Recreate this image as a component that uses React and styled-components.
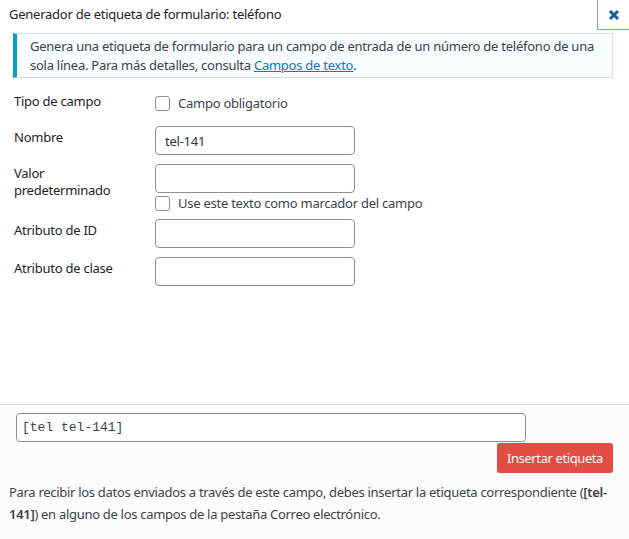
import React from 'react';
import styled, { createGlobalStyle } from 'styled-components';

const GlobalStyle = createGlobalStyle`
	html, body {
		margin: 0;
		padding: 0;
		background: #fff;
	}
	body {
		font-family: 'Noto Sans', 'Open Sans', sans-serif;
		font-size: 13px;
		letter-spacing: -0.25px;
		color: #3c434a;
	}
`;

function App() {
	return (
		<>
			<GlobalStyle />
			<Dialog>
				<Header>
					<Title>Generador de etiqueta de formulario: teléfono</Title>
					<CloseBtn aria-label="Cerrar">
						<svg width="12" height="12" viewBox="0 0 12 12">
							<path d="M2 2 L10 10 M10 2 L2 10" stroke="#135e96" strokeWidth="3" />
						</svg>
					</CloseBtn>
				</Header>
				<Body>
					<Notice>
						Genera una etiqueta de formulario para un campo de entrada de un número de teléfono de una
						sola línea. Para más detalles, consulta <a href="#">Campos de texto</a>.
					</Notice>
					<Form>
						<Row>
							<Label>Tipo de campo</Label>
							<Field $checkOnly>
								<CheckLine>
									<Check type="checkbox" />
									Campo obligatorio
								</CheckLine>
							</Field>
						</Row>
						<Row>
							<Label>Nombre</Label>
							<Field>
								<Input defaultValue="tel-141" />
							</Field>
						</Row>
						<Row>
							<Label $lines>Valor<br />predeterminado</Label>
							<Field>
								<Input />
								<CheckLine>
									<Check type="checkbox" />
									Use este texto como marcador del campo
								</CheckLine>
							</Field>
						</Row>
						<Row>
							<Label>Atributo de ID</Label>
							<Field>
								<Input />
							</Field>
						</Row>
						<Row>
							<Label>Atributo de clase</Label>
							<Field>
								<Input />
							</Field>
						</Row>
					</Form>
				</Body>
				<Footer>
					<TagInput readOnly value="[tel tel-141]" />
					<Actions>
						<InsertBtn>Insertar etiqueta</InsertBtn>
					</Actions>
					<Hint>
						Para recibir los datos enviados a través de este campo, debes insertar la etiqueta correspondiente (<b>[tel-141]</b>) en alguno de los campos de la pestaña Correo electrónico.
					</Hint>
				</Footer>
			</Dialog>
		</>
	);
}

export default App;

const Dialog = styled.div`
	width: 629px;
	height: 539px;
	display: flex;
	flex-direction: column;
	background: #fff;
	overflow: hidden;
`;

const Header = styled.div`
	display: flex;
	align-items: stretch;
	height: 30px;
`;

const Title = styled.h1`
	flex: 1;
	margin: 0;
	padding: 5px 9px 0;
	font-size: 13px;
	font-weight: 400;
	line-height: 18px;
	color: #1d2327;
`;

const CloseBtn = styled.button`
	width: 32px;
	height: 30px;
	padding: 0;
	border: none;
	border-left: 1px solid #72a6d6;
	border-bottom: 1px solid #72a6d6;
	background: #fff;
	display: flex;
	align-items: center;
	justify-content: center;
	cursor: pointer;
`;

const Body = styled.div`
	flex: 1;
	padding: 3px 16px 0 13px;
`;

const Notice = styled.div`
	border: 1px solid #dcdcde;
	border-left: 4px solid #00a0d2;
	background: #f7fcfe;
	padding: 3px 4px 2px 13px;
	line-height: 19px;
	color: #3c434a;

	a {
		color: #2271b1;
		text-decoration: underline;
	}
`;

const Form = styled.div`
	display: flex;
	flex-direction: column;
	gap: 9px;
	margin-top: 12px;
`;

const Row = styled.div`
	display: grid;
	grid-template-columns: 142px 1fr;
	align-items: start;
`;

const Label = styled.div`
	padding: ${(p) => (p.$lines ? '1px' : '2px')} 0 0 1px;
	line-height: ${(p) => (p.$lines ? '17px' : '18px')};
	color: #1d2327;
`;

const Field = styled.div`
	display: flex;
	flex-direction: column;
	gap: 3px;
	padding-top: ${(p) => (p.$checkOnly ? '6px' : '0')};
	min-height: ${(p) => (p.$checkOnly ? '21px' : '0')};
`;

const CheckLine = styled.label`
	display: flex;
	align-items: center;
	gap: 8px;
	height: 14px;
	line-height: 14px;
	color: #3c434a;
`;

const Check = styled.input`
	appearance: none;
	margin: 0;
	width: 15px;
	height: 15px;
	border: 1px solid #8c8f94;
	border-radius: 3px;
	background: #fff;
`;

const Input = styled.input`
	box-sizing: border-box;
	width: 200px;
	height: 29px;
	padding: 0 9px;
	border: 1px solid #8c8f94;
	border-radius: 4px;
	font-family: 'Noto Sans', sans-serif;
	font-size: 13px;
	letter-spacing: -0.25px;
	color: #2c3338;
	background: #fff;
	outline: none;
`;

const Footer = styled.div`
	box-sizing: border-box;
	height: 135px;
	border-top: 1px solid #dcdcde;
	background: #fcfcfc;
	padding: 8px 16px 0 9px;
`;

const TagInput = styled.input`
	box-sizing: border-box;
	display: block;
	margin-left: 7px;
	width: 510px;
	height: 29px;
	padding: 0 5px;
	border: 1px solid #8c8f94;
	border-radius: 4px;
	font-family: 'Liberation Mono', monospace;
	font-size: 13px;
	letter-spacing: 0;
	color: #3c434a;
	background: #fff;
	outline: none;
`;

const Actions = styled.div`
	display: flex;
	justify-content: flex-end;
	margin-top: 1px;
`;

const InsertBtn = styled.button`
	height: 30px;
	padding: 0 10px;
	border: none;
	border-radius: 3px;
	background: #e14d43;
	color: #fff;
	font-family: 'Noto Sans', sans-serif;
	font-size: 13px;
	letter-spacing: -0.4px;
	cursor: pointer;
`;

const Hint = styled.p`
	margin: 8px 0 0;
	line-height: 22px;
	font-size: 13px;
	letter-spacing: -0.3px;
	color: #3c434a;

	b {
		font-weight: 600;
	}
`;
